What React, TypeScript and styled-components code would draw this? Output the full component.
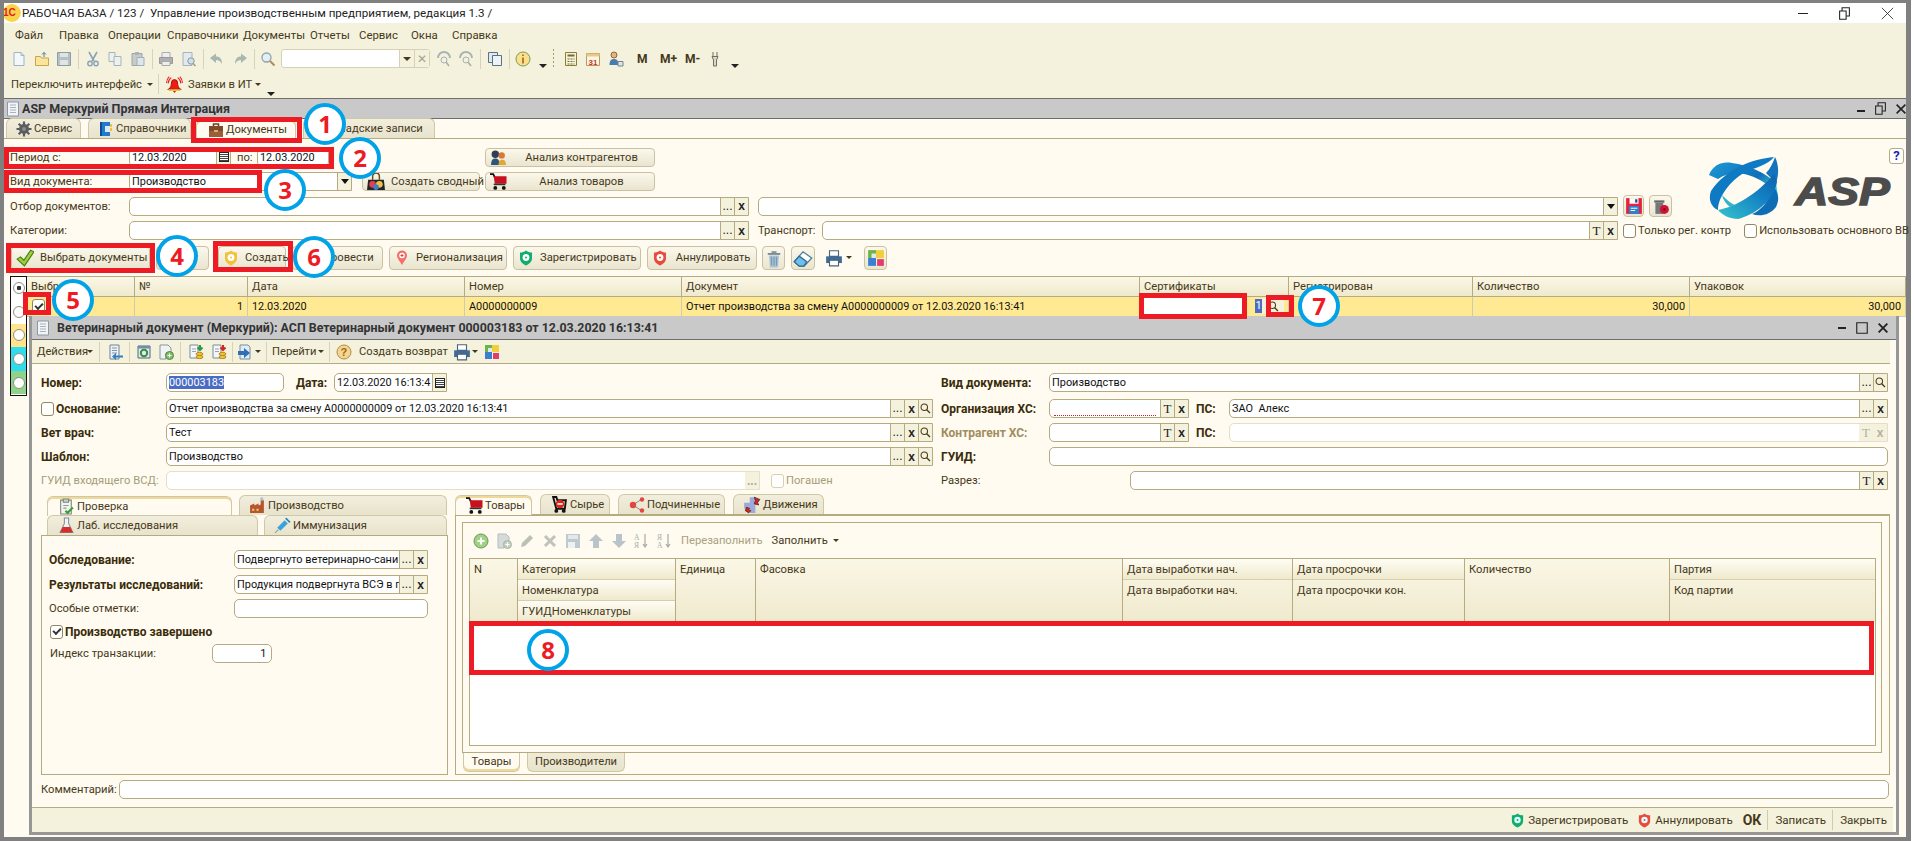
import React from 'react';
import styled, { createGlobalStyle } from 'styled-components';

const GlobalStyle = createGlobalStyle`
  html, body { margin: 0; padding: 0; background: #fff; overflow: hidden; }
  body { font-family: Roboto, 'Liberation Sans', Arial, sans-serif; font-size: 11.2px; color: #46391a; }
  * { box-sizing: border-box; }
`;

const TAN = '#b5ab80';
const CREAM = '#fffbf0';
const BAR = '#f4f1dd';
const BTN_BG = 'linear-gradient(#fbf8ec, #eae5cf)';

/* ---------- icons ---------- */

const Svg = styled.svg.attrs({ viewBox: '0 0 16 16' })<{ $s?: number }>`
  width: ${p => p.$s ?? 16}px;
  height: ${p => p.$s ?? 16}px;
  flex: none;
  display: block;
`;

const Logo1C = () => (
  <Svg $s={18}>
    <circle cx="7" cy="8" r="8" fill="#fbd34b" />
    <text x="-1" y="11" fontSize="9" fontWeight="700" fontFamily="Liberation Sans" fill="#d8261c">1С</text>
  </Svg>
);
const Page16 = ({ c = '#f4f8fb', s = '#9db4c6' }: { c?: string; s?: string }) => (
  <Svg>
    <path d="M3 1.500h7l3 3v10H3z" fill={c} stroke={s} />
    <path d="M10 1.500v3h3" fill="none" stroke={s} />
  </Svg>
);
const IcOpen = () => (
  <Svg>
    <path d="M1.500 5.500h5l1 1.500h7v7.500h-13z" fill="#fbe59a" stroke="#c9a64c" />
    <path d="M10 6V1.500M8 3.500l2-2 2 2" fill="none" stroke="#4f7a8c" />
  </Svg>
);
const IcSave = () => (
  <Svg>
    <path d="M1.500 1.500h13v13h-13z" fill="#b5c0c4" stroke="#8f9ca2" />
    <path d="M4 2h8v4H4zM4 9h8v5H4z" fill="#dfe4e4" />
  </Svg>
);
const IcCut = () => (
  <Svg>
    <path d="M4 1l5 9M12 1l-5 9" stroke="#8ba3b5" strokeWidth="1.600" fill="none" />
    <circle cx="5" cy="12.500" r="2.200" fill="none" stroke="#8ba3b5" strokeWidth="1.400" />
    <circle cx="11" cy="12.500" r="2.200" fill="none" stroke="#8ba3b5" strokeWidth="1.400" />
  </Svg>
);
const IcCopy = () => (
  <Svg>
    <path d="M2 1.500h6v9H2z" fill="#eef0ee" stroke="#a5b4bd" />
    <path d="M7 5.500h7v9H7z" fill="#eef0ee" stroke="#a5b4bd" />
  </Svg>
);
const IcPaste = () => (
  <Svg>
    <path d="M2 2.500h10v12H2z" fill="#c6ccc8" stroke="#9ca6a8" />
    <path d="M5 1h4v3H5z" fill="#aab4b8" />
    <path d="M7 6.500h7v8H7z" fill="#dfe6ea" stroke="#9fb0bb" />
  </Svg>
);
const IcPrintGray = () => (
  <Svg>
    <path d="M4 1.500h8v5H4z" fill="#eee" stroke="#aab" />
    <path d="M1.500 6.500h13v6h-13z" fill="#adb0ae" stroke="#999" />
    <path d="M4 10.500h8v4H4z" fill="#eee" stroke="#aaa" />
  </Svg>
);
const IcPreview = () => (
  <Svg>
    <path d="M2 1.500h9v13H2z" fill="#e3e9ec" stroke="#a5b4bd" />
    <circle cx="10" cy="10" r="3.200" fill="#cfe0ea" stroke="#8a9aa5" />
    <path d="M12 12.500l2.500 2.500" stroke="#b59a6c" strokeWidth="1.600" />
  </Svg>
);
const IcArrowSide = ({ flip }: { flip?: boolean }) => (
  <Svg>
    <path
      d={flip ? 'M15 7L9 2.500v3C5 5.500 3 8 3 13c2-3 3-4 6-4v3z' : 'M1 7l6-4.500v3c4 0 6 2.500 6 7.500-2-3-3-4-6-4v3z'}
      fill="#a7b8ae"
    />
  </Svg>
);
const IcMagnify = ({ s = 16 }: { s?: number }) => (
  <Svg $s={s}>
    <circle cx="6.500" cy="6.500" r="4.500" fill="#e3eef5" stroke="#8fa3ad" strokeWidth="1.300" />
    <path d="M10 10l4.500 4.500" stroke="#b08b5c" strokeWidth="2" />
  </Svg>
);
const IcTiny = () => (
  <Svg $s={13}>
    <circle cx="6.500" cy="6.500" r="4" fill="none" stroke="#4a3c14" strokeWidth="1.300" />
    <path d="M9.500 9.500l4 4" stroke="#4a3c14" strokeWidth="1.600" />
  </Svg>
);
const IcRefresh = () => (
  <Svg>
    <path d="M2 7a6 6 0 0 1 12 0" fill="none" stroke="#a9b3b5" strokeWidth="2" />
    <circle cx="8" cy="9" r="3" fill="none" stroke="#a5b0b5" />
    <path d="M10 11l3 4" stroke="#a5b0b5" strokeWidth="1.500" />
  </Svg>
);
const IcWindows = () => (
  <Svg>
    <path d="M1.500 1.500h9v10h-9z" fill="#dfe9f2" stroke="#5d7184" />
    <path d="M5.500 4.500h9v10h-9z" fill="#eef3f7" stroke="#5d7184" />
  </Svg>
);
const IcInfo = () => (
  <Svg>
    <circle cx="8" cy="8" r="7" fill="#fbe08a" stroke="#7d9a5c" />
    <path d="M8 3.500v1.500M8 6.500v6" stroke="#a8742b" strokeWidth="1.800" />
  </Svg>
);
const IcCalc = () => (
  <Svg>
    <path d="M2.500 1.500h11v13h-11z" fill="#f7f2cf" stroke="#8e7c36" />
    <path d="M4.500 3.500h7v2h-7z" fill="#6e6b4c" />
    <path d="M4.500 7.500h2v1h-2zM7.500 7.500h2v1h-2zM10.500 7.500h1v1h-1zM4.500 10h2v1h-2zM7.500 10h2v1h-2zM10.500 10h1v1h-1zM4.500 12.500h2v1h-2zM7.500 12.500h2v1h-2zM10.500 12.500h1v1h-1z" fill="#6e6b4c" />
  </Svg>
);
const IcCalendar = () => (
  <Svg>
    <path d="M1.500 2.500h13v12h-13z" fill="#fff6e2" stroke="#b49a62" />
    <path d="M1.500 2.500h13v3h-13z" fill="#e8c98a" />
    <text x="3.500" y="13.500" fontSize="8" fontFamily="Liberation Sans" fontWeight="700" fill="#c4382c">31</text>
  </Svg>
);
const IcUser = () => (
  <Svg>
    <circle cx="6" cy="4" r="3" fill="#e8b27c" stroke="#8a6a3c" />
    <path d="M1.500 14c0-5 2-6 4.500-6s3.500 1 4 3v3z" fill="#4a7ab0" />
    <path d="M10 10.500h5v4.500h-5z" fill="#dfe5ea" stroke="#77828c" />
  </Svg>
);
const IcWrench = () => (
  <Svg>
    <path d="M6 1v5M10 1v5M5 5.500h6L9.500 9v6h-3V9z" fill="#d8d8cf" stroke="#6f6f60" />
  </Svg>
);
const IcBell = () => (
  <Svg $s={17}>
    <path d="M8 3.500c2.500 0 3 2 3 4.500 0 2 1 3.500 2.500 4.500h-11C4 11.500 5 10 5 8c0-2.500.5-4.500 3-4.500z" fill="#ee1c14" stroke="#b8140c" />
    <path d="M2.500 12.500h11v1.500h-11z" fill="#d8c038" />
    <path d="M6.500 14h3L8 16z" fill="#ee1c14" />
    <path d="M2 7c0-2 1-4 3-5.500M14 7c0-2-1-4-3-5.500M.5 6.500C.5 4 1.500 2 3 .5M15.500 6.500c0-2.500-1-4.500-2.500-6" stroke="#e8241c" fill="none" />
  </Svg>
);
const IcGear = () => (
  <Svg>
    <path d="M8 .5v15M.5 8h15M2.700 2.700l10.600 10.600M13.300 2.700L2.700 13.300" stroke="#5b5d5e" strokeWidth="2.200" />
    <circle cx="8" cy="8" r="5" fill="#5b5d5e" />
    <circle cx="8" cy="8" r="2" fill="#8c8e8a" />
  </Svg>
);
const IcBook = () => (
  <Svg>
    <path d="M2 1h10v14H2z" fill="#1f7ad0" />
    <path d="M2 1h2v14H2z" fill="#0e4d92" />
    <path d="M7 5h5v6H7z" fill="#dbeaf7" />
    <path d="M12 3h2v3h-2zM12 7h2v3h-2z" fill="#f0c23c" />
  </Svg>
);
const IcCase = () => (
  <Svg>
    <path d="M5.500 4V2h5v2" fill="none" stroke="#6a3f1f" strokeWidth="1.500" />
    <path d="M1 4h14v11H1z" fill="#9a5f3a" />
    <path d="M1 4h14v5H1z" fill="#7f4a2a" />
    <path d="M6 8h4v2H6z" fill="#d8b06a" />
  </Svg>
);
const IcTick = ({ s = 18 }: { s?: number }) => (
  <Svg $s={s}>
    <path d="M1 9l3-2 3 3 6-9 3 1.500L7.500 15z" fill="#9ad13a" stroke="#4a7a18" />
  </Svg>
);
const Shield = ({ c, s = 16, dot = '#fff' }: { c: string; s?: number; dot?: string }) => (
  <Svg $s={s}>
    <path d="M8 .5c2 1.500 3.500 2 6 2v6c0 3.500-3 5.500-6 7-3-1.500-6-3.500-6-7v-6c2.500 0 4-.5 6-2z" fill={c} />
    <circle cx="8" cy="7.500" r="3.400" fill={dot} />
    <circle cx="8" cy="7.500" r="1" fill={c} />
  </Svg>
);
const IcPin = () => (
  <Svg>
    <path d="M8 15C5 10 3 8 3 5.500a5 5 0 0 1 10 0C13 8 11 10 8 15z" fill="#f4706a" />
    <circle cx="8" cy="5.500" r="2.800" fill="#fff" />
    <path d="M8 4v3M6.500 5.500h3" stroke="#e8392f" />
  </Svg>
);
const IcTrash = () => (
  <Svg $s={20}>
    <path d="M3 4h10v1.500H3z" fill="#7d8a93" />
    <path d="M6 2.500h4V4H6z" fill="#8a98a0" />
    <path d="M4 6h8l-.8 9.500H4.800z" fill="#a9c4d8" />
    <path d="M6 7v7M8 7v7M10 7v7" stroke="#7b9ab2" />
  </Svg>
);
const IcEraser = () => (
  <Svg $s={20}>
    <path d="M1 11l7-8 7 5-6 6.500H5z" fill="#fff" stroke="#4a7c9a" />
    <path d="M1 11l4-4.500 6 4.500-2.500 3.500H5z" fill="#6fc0e8" stroke="#2f6c94" />
  </Svg>
);
const IcPrinter = () => (
  <Svg $s={18}>
    <path d="M4 1.500h8v5H4z" fill="#fff" stroke="#4f6377" />
    <path d="M1 6.500h14v6H1z" fill="#3e6c96" />
    <path d="M4 10h8v5H4z" fill="#fff" stroke="#4f6377" />
  </Svg>
);
const IcPuzzle = ({ s = 18 }: { s?: number }) => (
  <Svg $s={s}>
    <path d="M1 1h7v7H1z" fill="#6fb24c" />
    <path d="M8 1h7v7H8z" fill="#f1cf38" />
    <path d="M1 8h7v7H1z" fill="#3c7fd0" />
    <path d="M9 9h6v6H9z" fill="#e23c6e" />
    <path d="M4 4h4v4H4z" fill="#dfe8ea" />
  </Svg>
);
const IcPeople = () => (
  <Svg $s={17}>
    <circle cx="5" cy="5" r="3.500" fill="#2e3f55" />
    <circle cx="11" cy="6" r="3" fill="#d8793b" />
    <path d="M1 15c0-5 2-6 4-6s4 1 4 6z" fill="#2f557a" />
    <path d="M8 15c0-4 1.500-5 3.500-5s3.500 1 3.500 5z" fill="#e0a83c" />
  </Svg>
);
const IcCart = ({ s = 17 }: { s?: number }) => (
  <Svg $s={s}>
    <path d="M0 1h3l1.500 3" fill="none" stroke="#111" strokeWidth="1.600" />
    <path d="M3.500 3h12v7h-11z" fill="#c8101e" />
    <path d="M3.500 10h11v1.500h-11z" fill="#333" />
    <circle cx="5" cy="14" r="1.800" fill="#111" />
    <circle cx="13" cy="14" r="1.800" fill="#111" />
  </Svg>
);
const IcRaw = () => (
  <Svg $s={17}>
    <path d="M2 1h3l1 3h8l-1 8H5z" fill="none" stroke="#111" strokeWidth="1.800" />
    <circle cx="8.500" cy="7.500" r="4" fill="#d8261c" />
    <path d="M6 7.500h5" stroke="#fff" strokeWidth="1.500" />
    <circle cx="5" cy="14" r="1.800" fill="#111" />
    <circle cx="12" cy="14" r="1.800" fill="#111" />
  </Svg>
);
const IcTree = () => (
  <Svg>
    <path d="M4 8l9-6M4 8l9 6" stroke="#888" />
    <circle cx="4" cy="8" r="3.200" fill="#e34444" />
    <circle cx="13" cy="2.500" r="2.200" fill="#e34444" />
    <circle cx="13" cy="13.500" r="2.200" fill="#e34444" />
  </Svg>
);
const IcMoves = () => (
  <Svg $s={18}>
    <path d="M1 6h5V1h5v14H6v-4H1z" fill="#9ea8da" />
    <path d="M10 1l5 2-2 3 1 2-4-1 1-3z" fill="#d8261c" stroke="#111" strokeWidth=".5" />
    <path d="M5 15l-3-2 1-3 3 1-1 1 2 1z" fill="#d8261c" stroke="#111" strokeWidth=".5" />
  </Svg>
);
const IcBag = () => (
  <Svg $s={18}>
    <path d="M5 6V3a3 3 0 0 1 6 0v3" fill="none" stroke="#6a4a1f" strokeWidth="1.300" />
    <path d="M1 6h14l1 9H0z" fill="#22252b" />
    <circle cx="5" cy="10" r="3" fill="#e2404c" />
    <circle cx="11" cy="10" r="3" fill="#f2c23c" />
    <circle cx="8" cy="12.500" r="2.500" fill="#3c7fd0" />
  </Svg>
);
const IcRedSave = () => (
  <Svg $s={18}>
    <path d="M1 1h14v14H1z" fill="#e2233a" />
    <path d="M4 1h8v5H4z" fill="#fff" />
    <path d="M9 2h2v3H9z" fill="#1c4f96" />
    <path d="M3.500 8h9v7h-9z" fill="#2f7fd0" />
    <path d="M5 10h6M5 12h4" stroke="#fff" />
  </Svg>
);
const IcRedTrash = () => (
  <Svg $s={18}>
    <path d="M2 3h9v2H2z" fill="#666" />
    <path d="M3 5h7v10H3z" fill="#77777a" />
    <circle cx="11" cy="11" r="4" fill="#d41034" />
    <circle cx="11" cy="11" r="1" fill="#4a0a16" />
  </Svg>
);
const IcDoc = () => (
  <Svg>
    <path d="M2.500 1h11v14h-11z" fill="#f2f4f6" stroke="#8c98a5" />
    <path d="M5 4h6M5 6.500h6M5 9h6M5 11.500h6" stroke="#a9b3bd" />
  </Svg>
);
const DocArrow = ({ c }: { c: string }) => (
  <Svg>
    <path d="M2 1h9v14H2z" fill="#eef2f6" stroke="#6f8296" />
    <path d="M4 4h5M4 6.500h5M4 9h5" stroke="#7f96ab" />
    <path d="M15 11.500H8V9l-4 3.500L8 16v-2.500h7z" fill={c} />
  </Svg>
);
const DocCycle = () => (
  <Svg>
    <path d="M2 2h12v12H2z" fill="#dfe9ef" stroke="#55697a" />
    <path d="M2 2h12v2.500H2z" fill="#6f8fa8" />
    <circle cx="8" cy="9" r="3.200" fill="none" stroke="#3c8f3c" strokeWidth="2" />
  </Svg>
);
const DocPlus = ({ faded }: { faded?: boolean }) => (
  <Svg>
    <path d="M2 1h8l3 3v5H8v6H2z" fill={faded ? '#d6dadb' : '#f0f2f4'} stroke={faded ? '#b5bbbc' : '#8795a2'} />
    <circle cx="11.500" cy="11.500" r="4" fill={faded ? '#c3d1bf' : '#7fbe6a'} stroke={faded ? '#a8b4a4' : '#4f8a3f'} />
    <path d="M11.500 9.500v4M9.500 11.500h4" stroke="#fff" />
  </Svg>
);
const DocCoins = ({ c }: { c: string }) => (
  <Svg>
    <path d="M2 1h8v13H2z" fill="#f4f6f8" stroke="#7c8b99" />
    <path d="M4 5h4M4 7.500h4" stroke="#96a3ae" />
    <path d="M12 6V1M9.500 3.500L12 6l2.500-2.500" fill="none" stroke={c} strokeWidth="2" />
    <ellipse cx="11.500" cy="10" rx="3.500" ry="1.600" fill="#f0c23c" stroke="#b68a1c" />
    <ellipse cx="11.500" cy="13" rx="3.500" ry="1.600" fill="#f0c23c" stroke="#b68a1c" />
  </Svg>
);
const IcGo = () => (
  <Svg>
    <path d="M3 1h8l2 2v12H3z" fill="#e4ecf3" stroke="#7c8b99" />
    <path d="M1 7h6V4l6 5-6 5v-3H1z" fill="#2f6fb5" />
  </Svg>
);
const IcHelp = () => (
  <Svg>
    <circle cx="8" cy="8" r="7" fill="#f6d58f" stroke="#b28a4c" />
    <text x="4.500" y="12" fontSize="11" fontWeight="700" fontFamily="Liberation Sans" fill="#9a6a1c">?</text>
  </Svg>
);
const IcCheckDoc = () => (
  <Svg $s={17}>
    <path d="M2.500 2h10v13h-10z" fill="#f2f4f0" stroke="#7a8778" />
    <path d="M5 1h5v3H5z" fill="#c9cfc9" stroke="#7a8778" />
    <path d="M5 7h5M5 9.500h3" stroke="#8f9a8f" />
    <path d="M7 12l2 2 5-5" fill="none" stroke="#3f9a3c" strokeWidth="2" />
  </Svg>
);
const IcFactory = () => (
  <Svg $s={17}>
    <path d="M1 8l4-2v2l4-2v2l2-1V3h3v12H1z" fill="#b5562c" />
    <circle cx="12" cy="1.800" r="1.600" fill="#a9c2d8" />
    <path d="M3 11h2v2H3zM7 11h2v2H7z" fill="#f0d07a" />
  </Svg>
);
const IcFlask = () => (
  <Svg $s={17}>
    <path d="M6 1h4v5l4 8.500H2L6 6z" fill="#f2f2f2" stroke="#7d8f9a" />
    <path d="M4.500 9.500h7L14 14.500H2z" fill="#d82c2c" />
  </Svg>
);
const IcSyringe = () => (
  <Svg $s={17}>
    <path d="M1 15l3-3" stroke="#8aa" />
    <path d="M3 10l7-7 3 3-7 7z" fill="#38a4df" />
    <path d="M11 1l4 4" stroke="#2f7fb5" strokeWidth="1.500" />
  </Svg>
);
const IcAdd = () => (
  <Svg>
    <circle cx="8" cy="8" r="7" fill="#9bd67e" stroke="#7b8a70" />
    <path d="M8 4.500v7M4.500 8h7" stroke="#fff" strokeWidth="2" />
  </Svg>
);
const IcPencil = () => (
  <Svg>
    <path d="M2 14l1-4 8-8 3 3-8 8z" fill="#b9c1b6" />
  </Svg>
);
const IcCross = () => (
  <Svg>
    <path d="M3 3l10 10M13 3L3 13" stroke="#c0c3bb" strokeWidth="3" />
  </Svg>
);
const IcFloppyFaded = () => (
  <Svg>
    <path d="M1 1h14v14H1z" fill="#bfcad0" />
    <path d="M3 2h10v4H3z" fill="#e3e8ea" />
    <path d="M3 9h7v6H3z" fill="#eef1f2" />
  </Svg>
);
const IcUpDown = ({ down }: { down?: boolean }) => (
  <Svg>
    <path d={down ? 'M5 1h6v7h4l-7 7-7-7h4z' : 'M5 15h6V8h4L8 1 1 8h4z'} fill="#b9c4c8" />
  </Svg>
);
const IcSort = ({ rev }: { rev?: boolean }) => (
  <Svg>
    <text x="0" y="7" fontSize="7.500" fontFamily="Liberation Serif" fill="#a4aca8">{rev ? 'Я' : 'А'}</text>
    <text x="0" y="15" fontSize="7.500" fontFamily="Liberation Serif" fill="#a4aca8">{rev ? 'А' : 'Я'}</text>
    <path d="M11 1v13M9 11l2 3 2-3" fill="none" stroke="#a4aca8" strokeWidth="1.200" />
  </Svg>
);
const IcRestore = () => (
  <Svg $s={13}>
    <path d="M2 5h8v10H2z" fill="none" stroke="#222" strokeWidth="1.300" />
    <path d="M5 5V1h9v10h-4" fill="none" stroke="#222" strokeWidth="1.300" />
  </Svg>
);
const IcClose = ({ s = 12, w = 1 }: { s?: number; w?: number }) => (
  <Svg $s={s}>
    <path d="M1 1l14 14M15 1L1 15" stroke="#222" strokeWidth={w} />
  </Svg>
);
const IcSquare = () => (
  <Svg $s={12}>
    <path d="M1 1h14v14H1z" fill="none" stroke="#222" strokeWidth="1.500" />
  </Svg>
);

const LogoSvg = styled.svg`
  width: 71px;
  height: 63px;
  flex: none;
  display: block;
`;

const SwirlLogo = () => (
  <LogoSvg viewBox="0 0 71 63">
    <defs>
      <linearGradient id="swirlA" x1="0" y1="0" x2="1" y2="0.600">
        <stop offset="0" stopColor="#1c9ad6" />
        <stop offset="0.700" stopColor="#0f6fb8" />
        <stop offset="1" stopColor="#35c0cc" />
      </linearGradient>
      <linearGradient id="swirlB" x1="0" y1="1" x2="1" y2="0">
        <stop offset="0" stopColor="#35c4cc" />
        <stop offset="0.600" stopColor="#1481c4" />
        <stop offset="1" stopColor="#0b62ad" />
      </linearGradient>
    </defs>
    <path d="M1 18C5 8 14 4 24 6c16 2 34 10 44 20l2 14c-4-8-16-18-30-22-10-3-22-2-30 4z" fill="url(#swirlA)" />
    <path d="M66 0C44 2 18 12 3 34c-3 8 0 16 7 19C10 40 22 24 36 16 48 10 60 8 66 0z" fill="#0f7ac4" />
    <path d="M67 0c4 8 4 18 1 26L58 16c4-4 7-10 9-16z" fill="#1473bd" />
    <path d="M66 30c4 6 6 12 2 20-6 8-16 10-24 7 8-3 16-11 22-27z" fill="#0f6db5" />
    <path d="M10 53c18-3 40-17 56-36l3 8c-4 20-23 33-39 37-8 0-16-4-20-9z" fill="url(#swirlB)" />
    <path d="M14 38c4 4 8 8 13 10l-5 2c-4-3-7-7-8-12z" fill="#2fb6cc" />
  </LogoSvg>
);

/* ---------- page shell ---------- */

const Stage = styled.div`
  position: relative;
  width: 1914px;
  height: 841px;
  overflow: hidden;
`;

const Frame = styled.div`
  width: 1911px;
  height: 841px;
  border-style: solid;
  border-color: #808080;
  border-width: 3px 5px 4px 4px;
  display: flex;
  flex-direction: column;
  background: ${CREAM};
`;

const AppTitle = styled.div`
  height: 20px;
  background: #fff;
  display: flex;
  align-items: center;
  color: #222;
  padding-right: 12px;
  font-size: 11.600px;
`;

const AppTitleText = styled.span`
  white-space: pre;
  flex: 1;
`;

const WinControls = styled.div<{ $gap?: number }>`
  display: flex;
  align-items: center;
  gap: ${p => p.$gap ?? 30}px;
`;

const MinLine = styled.i<{ $w?: number; $t?: number; $low?: number }>`
  display: block;
  width: ${p => p.$w ?? 10}px;
  height: ${p => p.$t ?? 1}px;
  background: #222;
  align-self: ${p => (p.$low ? 'flex-end' : 'center')};
  margin-bottom: ${p => p.$low ?? 0}px;
`;

const MainChrome = styled.div`
  height: 75px;
  background: ${BAR};
  display: flex;
  flex-direction: column;
`;

const MenuRow = styled.div`
  height: 24px;
  display: flex;
  align-items: center;
  padding-left: 11px;
  font-size: 11.400px;
`;

const MenuItem = styled.span<{ $w: number }>`
  width: ${p => p.$w}px;
  flex: none;
  white-space: nowrap;
`;

const Toolbar = styled.div<{ $h: number; $pl?: number }>`
  height: ${p => p.$h}px;
  display: flex;
  align-items: center;
  padding-left: ${p => p.$pl ?? 4}px;
`;

const ToolBtn = styled.div<{ $w?: number; $l?: number }>`
  width: ${p => p.$w ?? 22.5}px;
  height: 20px;
  margin-left: ${p => p.$l ?? 0}px;
  display: flex;
  align-items: center;
  justify-content: center;
  flex: none;
`;

const Sep = styled.i<{ $m?: number; $dotted?: boolean }>`
  display: block;
  width: 1px;
  height: 20px;
  flex: none;
  margin: 0 ${p => p.$m ?? 2.5}px;
  background: ${p => (p.$dotted ? 'repeating-linear-gradient(#a39a70 0 2px, transparent 2px 4px)' : '#d8d3b8')};
`;

const Caret = styled.i<{ $l?: number; $dark?: boolean; $d?: number }>`
  display: block;
  width: 0;
  height: 0;
  flex: none;
  margin-left: ${p => p.$l ?? 4}px;
  border-left: ${p => p.$d ?? 3}px solid transparent;
  border-right: ${p => p.$d ?? 3}px solid transparent;
  border-top: ${p => p.$d ?? 3}px solid ${p => (p.$dark ? '#222' : '#46391a')};
`;

const LowCaret = styled(Caret)`
  align-self: flex-end;
  margin-bottom: 2px;
`;

const Combo = styled.div`
  width: 149px;
  height: 19px;
  margin-left: 1px;
  display: flex;
  background: #fff;
  border: 1px solid #d6d1b6;
  border-radius: 3px;
  flex: none;
`;

const ComboSpace = styled.span`
  flex: 1;
`;

const ComboBtn = styled.div<{ $w: number }>`
  width: ${p => p.$w}px;
  flex: none;
  background: ${BAR};
  border-left: 1px solid #d6d1b6;
  display: flex;
  align-items: center;
  justify-content: center;
  color: #a7a290;
  font-size: 12px;
`;

const MemLabel = styled.b<{ $w: number; $l?: number }>`
  width: ${p => p.$w}px;
  margin-left: ${p => p.$l ?? 0}px;
  flex: none;
  font-size: 12px;
`;

const ToolText = styled.span<{ $faded?: boolean; $l?: number }>`
  white-space: nowrap;
  flex: none;
  margin-left: ${p => p.$l ?? 0}px;
  color: ${p => (p.$faded ? '#a8a17e' : '#46391a')};
`;

/* ---------- base form ---------- */

const BaseWindow = styled.div`
  flex: 1;
  min-height: 0;
  display: flex;
  flex-direction: column;
`;

const GrayTitle = styled.div<{ $h: number }>`
  height: ${p => p.$h}px;
  flex: none;
  background: #c9c9c9;
  display: flex;
  align-items: center;
  font-weight: 700;
  font-size: 12.500px;
  color: #333;
  white-space: nowrap;
`;

const BaseTitle = styled(GrayTitle)`
  border-top: 1px solid #6e6e6e;
  border-bottom: 1px solid #6e6e6e;
  padding-left: 1px;
`;

const TitleText = styled.span<{ $l: number }>`
  margin-left: ${p => p.$l}px;
  flex: 1;
`;

const TabBar = styled.div<{ $gaps?: number; $pl?: number; $line?: boolean }>`
  height: 20px;
  flex: none;
  display: flex;
  align-items: flex-end;
  gap: ${p => p.$gaps ?? 6}px;
  padding-left: ${p => p.$pl ?? 0}px;
  border-bottom: ${p => (p.$line ? `1px solid ${TAN}` : 'none')};
`;

const Tab = styled.div<{ $w: number; $active?: boolean; $pl?: number; $ml?: number }>`
  width: ${p => p.$w}px;
  height: 20px;
  flex: none;
  display: flex;
  align-items: center;
  gap: 2px;
  margin-left: ${p => p.$ml ?? 0}px;
  padding-left: ${p => p.$pl ?? 9}px;
  white-space: nowrap;
  border: 1px solid #cfc8a6;
  border-bottom: none;
  border-radius: 6px 6px 0 0;
  background: ${p => (p.$active ? CREAM : 'linear-gradient(#f2eedd, #e8e3cc)')};
  box-shadow: ${p => (p.$active ? 'inset 0 2px 0 #f0d898' : 'none')};
  margin-bottom: ${p => (p.$active ? -1 : 0)}px;
  position: relative;
`;

const TopBlock = styled.div`
  display: flex;
  padding: 8px 0 0 6px;
  flex: none;
`;

const LeftRows = styled.div`
  width: 1662px;
  flex: none;
  display: flex;
  flex-direction: column;
  gap: 4.5px;
`;

const LogoCol = styled.div`
  margin-left: 36px;
  display: flex;
  flex-direction: column;
  height: 68px;
`;

const HelpBtn = styled.div`
  width: 15px;
  height: 16px;
  margin: 1px 0 0 181px;
  border: 1px solid ${TAN};
  border-radius: 3px;
  background: #fff;
  color: #1f1fa8;
  font-weight: 700;
  font-size: 13px;
  line-height: 14px;
  text-align: center;
`;

const LogoLine = styled.div`
  display: flex;
  align-items: center;
  margin-top: -7px;
`;

const LogoWord = styled.span`
  font: italic 700 39px/1 'Liberation Sans', sans-serif;
  color: #4c4c4c;
  margin: 5px 0 0 16px;
  -webkit-text-stroke: 1.500px #4c4c4c;
  transform: scaleX(1.180);
  transform-origin: left center;
`;

const Row = styled.div<{ $h?: number; $mt?: number; $pl?: number }>`
  display: flex;
  align-items: center;
  height: ${p => p.$h ?? 20}px;
  flex: none;
  margin-top: ${p => p.$mt ?? 0}px;
  padding-left: ${p => p.$pl ?? 0}px;
`;

const Label = styled.span<{ $w?: number; $l?: number; $bold?: boolean; $muted?: boolean; $tan?: boolean }>`
  width: ${p => (p.$w ? `${p.$w}px` : 'auto')};
  flex: none;
  margin-left: ${p => p.$l ?? 0}px;
  white-space: nowrap;
  font-size: ${p => (p.$bold || p.$tan ? '12px' : 'inherit')};
  font-weight: ${p => (p.$bold || p.$tan ? 700 : 400)};
  color: ${p => (p.$muted ? '#a59c78' : p.$tan ? '#9f8d5e' : p.$bold ? '#3a2c0a' : '#46391a')};
`;

const Field = styled.div<{ $w?: number; $l?: number; $disabled?: boolean; $grow?: boolean }>`
  width: ${p => (p.$w ? `${p.$w}px` : 'auto')};
  flex: ${p => (p.$grow ? 1 : 'none')};
  min-width: 0;
  height: 19px;
  margin-left: ${p => p.$l ?? 0}px;
  display: flex;
  align-items: stretch;
  background: #fff;
  border: 1px solid ${p => (p.$disabled ? '#e4dfc9' : TAN)};
  border-radius: 5px 0 0 5px;
  overflow: hidden;
  color: #111;
`;

const RoundField = styled(Field)`
  border-radius: 5px;
`;

const FieldText = styled.span<{ $right?: boolean }>`
  flex: 1;
  min-width: 0;
  padding: 0 2px;
  line-height: 17px;
  font-size: 10.900px;
  white-space: pre;
  overflow: hidden;
  text-align: ${p => (p.$right ? 'right' : 'left')};
`;

const Picked = styled.span`
  background: #4a6cc4;
  color: #fff;
`;

const InvalidField = styled.span`
  flex: 1;
  margin: 0 4px 1px;
  border-bottom: 1px dotted #c4222a;
`;

const Addon = styled.div<{ $w?: number; $faded?: boolean; $serif?: boolean }>`
  width: ${p => p.$w ?? 14}px;
  flex: none;
  display: flex;
  align-items: center;
  justify-content: center;
  background: ${BAR};
  border-left: ${p => (p.$faded ? 'none' : `1px solid ${TAN}`)};
  color: ${p => (p.$faded ? '#b3b0a0' : '#222')};
  font: ${p => (p.$serif ? "13px 'Liberation Serif', serif" : "700 12px 'Liberation Sans', sans-serif")};
`;

const Dots = styled(Addon)`
  font-weight: 400;
  align-items: flex-end;
  line-height: 14px;
  padding-bottom: 2px;
`;

const CalGrid = styled.i`
  width: 10px;
  height: 10px;
  display: block;
  border: 1px solid #222;
  background: repeating-linear-gradient(#fff 0 1px, #444 1px 2px);
`;

const DownTri = styled.i`
  width: 0;
  height: 0;
  border-left: 4px solid transparent;
  border-right: 4px solid transparent;
  border-top: 5px solid #111;
`;

const Button = styled.div<{ $w: number; $l?: number; $h?: number; $pl?: number }>`
  width: ${p => p.$w}px;
  height: ${p => p.$h ?? 19}px;
  flex: none;
  margin-left: ${p => p.$l ?? 0}px;
  display: flex;
  align-items: center;
  padding: 0 4px 0 ${p => p.$pl ?? 4}px;
  gap: 6px;
  background: ${BTN_BG};
  border: 1px solid #c9c1a0;
  border-radius: 4px;
  white-space: nowrap;
  color: #46391a;
`;

const BtnLabel = styled.span`
  flex: 1;
  text-align: center;
`;

const SquareBtn = styled(Button)`
  justify-content: center;
  padding: 0;
`;

const ChkBox = styled.i<{ $l?: number; $faded?: boolean }>`
  display: flex;
  align-items: center;
  justify-content: center;
  flex: none;
  width: 13px;
  height: 14px;
  margin-left: ${p => p.$l ?? 0}px;
  margin-right: 2px;
  background: #fff;
  border: 1px solid ${p => (p.$faded ? '#d6d1b6' : '#8f8862')};
  border-radius: 3px;
  font-style: normal;
`;

const Tick = styled.span`
  width: 8px;
  height: 5px;
  margin-top: -2px;
  border-left: 2px solid #333;
  border-bottom: 2px solid #333;
  transform: rotate(-45deg);
`;

const ActionRow = styled(Row)`
  height: 24px;
  margin: 5px 0 0 7px;
`;

const TableArea = styled.div`
  display: flex;
  margin-top: 6px;
  padding-left: 6px;
  flex: 1;
`;

const RadioCol = styled.div`
  width: 17px;
  height: 120px;
  flex: none;
  border: 1px solid #111;
  display: flex;
  flex-direction: column;
`;

const RadioSeg = styled.div<{ $bg: string }>`
  flex: 1;
  background: ${p => p.$bg};
  display: flex;
  align-items: center;
  justify-content: center;
`;

const Radio = styled.i<{ $on?: boolean }>`
  width: 12px;
  height: 12px;
  border-radius: 50%;
  background: ${p => (p.$on ? 'radial-gradient(#333 0 2px, #fff 2.5px)' : '#fff')};
  border: 1px solid #8f8f80;
  display: block;
`;

const TableBox = styled.div`
  flex: 1;
`;

const TableGrid = styled.div<{ $row?: boolean }>`
  display: grid;
  grid-template-columns: 108px 113px 217px 217px 458px 149px 184px 217px 216px;
  height: ${p => (p.$row ? 20 : 21)}px;
  background: ${p => (p.$row ? '#ffe993' : 'linear-gradient(#fbf7e6, #efe9cd)')};
  border-top: ${p => (p.$row ? 'none' : `1px solid ${TAN}`)};
  border-bottom: ${p => (p.$row ? '1px solid #b9cfe6' : `1px solid ${TAN}`)};
`;

const Cell = styled.div<{ $right?: boolean; $row?: boolean }>`
  display: flex;
  align-items: center;
  justify-content: ${p => (p.$right ? 'flex-end' : 'flex-start')};
  padding: 0 4px;
  white-space: nowrap;
  overflow: hidden;
  border-right: 1px solid ${p => (p.$row ? '#c9cdb8' : TAN)};
  color: ${p => (p.$row ? '#111' : '#46391a')};
  font-size: ${p => (p.$row ? '10.900px' : 'inherit')};
`;

const HiNum = styled.span`
  background: #4a6cc4;
  color: #fff;
  width: 7px;
  margin-left: auto;
  line-height: 14px;
  font-size: 11px;
  text-align: center;
`;

const MiniSearch = styled.span`
  width: 22px;
  height: 16px;
  flex: none;
  display: flex;
  align-items: center;
  justify-content: center;
  background: ${BAR};
`;

/* ---------- vet document window ---------- */

const VetWindow = styled.section`
  position: absolute;
  left: 29px;
  top: 316px;
  width: 1870px;
  height: 519px;
  display: flex;
  flex-direction: column;
  background: ${CREAM};
  border: 3px solid #979797;
  border-top: none;
`;

const VetTitle = styled(GrayTitle)`
  padding-left: 3px;
  padding-right: 8px;
  border-bottom: 1px solid #6e6e6e;
  font-size: 12.400px;
`;

const VetToolbar = styled.div`
  width: 1858px;
  height: 24px;
  flex: none;
  background: ${BAR};
  border-bottom: 1px solid ${TAN};
  display: flex;
  align-items: center;
  padding-left: 5px;
`;

const ActionsText = styled(ToolText)`
  width: 46px;
`;

const GoText = styled(ToolText)`
  width: 42px;
`;

const ReturnText = styled(ToolText)`
  width: 87px;
`;

const VetBody = styled.div`
  flex: 1;
  min-height: 0;
  padding: 9px 7px 0 9px;
  display: flex;
  flex-direction: column;
`;

const HeaderForm = styled.div`
  display: flex;
  gap: 8px;
  flex: none;
`;

const FormCol = styled.div<{ $w: number }>`
  width: ${p => p.$w}px;
  flex: none;
  display: flex;
  flex-direction: column;
  gap: 5px;
`;

const FormRow = styled(Row)<{ $after?: number }>`
  height: 19px;
  margin-bottom: ${p => p.$after ?? 0}px;
`;

const Panes = styled.div`
  display: flex;
  gap: 7px;
  margin: 5px 0 0 0;
  height: 280px;
  flex: none;
`;

const LeftPane = styled.div`
  width: 407px;
  flex: none;
  display: flex;
  flex-direction: column;
`;

const TabPanel = styled.div`
  flex: 1;
  min-height: 0;
  border: 1px solid ${TAN};
`;

const LeftPanel = styled(TabPanel)`
  padding: 14px 19px 0 7px;
  display: flex;
  flex-direction: column;
`;

const PanelRow = styled(Row)<{ $after?: number; $ind?: number }>`
  height: 19px;
  margin-bottom: ${p => p.$after ?? 5}px;
  padding-left: ${p => p.$ind ?? 0}px;
`;

const RightPane = styled.div`
  width: 1435px;
  flex: none;
  display: flex;
  flex-direction: column;
`;

const RightPanel = styled(TabPanel)`
  padding: 6px 7px 0 6px;
  display: flex;
  flex-direction: column;
`;

const InnerBox = styled.div`
  height: 231px;
  flex: none;
  border: 1px solid ${TAN};
  display: flex;
  flex-direction: column;
  padding: 0 6px;
`;

const InnerToolbar = styled.div`
  height: 35px;
  flex: none;
  display: flex;
  align-items: center;
  padding-left: 0;
`;

const GridBox = styled.div`
  width: 1407px;
  height: 188px;
  background: #fff;
  border: 1px solid ${TAN};
  flex: none;
`;

const GridHead = styled.div`
  display: grid;
  grid-template-columns: 48px 158px 80px 367px 170px 172px 205px 1fr;
  height: 63px;
`;

const HeadCol = styled.div`
  display: flex;
  flex-direction: column;
  border-right: 1px solid ${TAN};
  &:last-child { border-right: none; }
  background: linear-gradient(#fbf7e6, #efe9cd);
`;

const HeadCell = styled.div<{ $grow?: boolean; $line?: boolean }>`
  height: 21px;
  flex: ${p => (p.$grow ? 1 : 'none')};
  padding: 4px 4px 0;
  white-space: nowrap;
  background: ${p => (p.$line ? 'linear-gradient(#fffdf4, #efe9cd)' : 'none')};
  border-bottom: ${p => (p.$line ? `1px solid #d6cfab` : 'none')};
`;

const BottomTabs = styled.div`
  display: flex;
  gap: 7px;
  padding-left: 1px;
`;

const LowTab = styled.div<{ $w: number; $active?: boolean }>`
  width: ${p => p.$w}px;
  height: 19px;
  flex: none;
  text-align: center;
  line-height: 17px;
  border: 1px solid #cfc8a6;
  border-top: none;
  border-radius: 0 0 6px 6px;
  background: ${p => (p.$active ? CREAM : 'linear-gradient(#efebd8, #e8e3cc)')};
  box-shadow: ${p => (p.$active ? 'inset 0 -2px 0 #f0d898' : 'none')};
`;

const CommentRow = styled(Row)`
  height: 19px;
  margin: 5px 0 0 0;
`;

const StatusBar = styled.div`
  margin-top: 7px;
  height: 25px;
  width: 1861px;
  flex: none;
  background: ${BAR};
  border-top: 1px solid ${TAN};
  display: flex;
  align-items: center;
  justify-content: flex-end;
  padding-right: 6px;
`;

const StatusItem = styled.span<{ $ok?: boolean; $l?: number; $w?: number }>`
  display: flex;
  align-items: center;
  gap: 3px;
  width: ${p => (p.$w ? `${p.$w}px` : 'auto')};
  margin-left: ${p => p.$l ?? 9}px;
  white-space: nowrap;
  font-weight: ${p => (p.$ok ? 700 : 400)};
  font-size: ${p => (p.$ok ? 14 : 11.600)}px;
`;

const StatusSep = styled.i`
  width: 1px;
  height: 20px;
  margin-left: 6px;
  background: #d0cbae;
`;

/* ---------- annotations ---------- */

const Marker = styled.div<{ $x: number; $y: number; $w: number; $h: number; $white?: boolean }>`
  position: absolute;
  left: ${p => p.$x}px;
  top: ${p => p.$y}px;
  width: ${p => p.$w}px;
  height: ${p => p.$h}px;
  border: 5px solid #ed1c24;
  background: ${p => (p.$white ? '#fff' : 'transparent')};
  pointer-events: none;
`;

const Badge = styled.div<{ $x: number; $y: number }>`
  position: absolute;
  left: ${p => p.$x - 21}px;
  top: ${p => p.$y - 21}px;
  width: 42px;
  height: 42px;
  border-radius: 50%;
  border: 4px solid #00a2e8;
  background: #fff;
  color: #ed1c24;
  font: 700 24px/34px 'Open Sans', sans-serif;
  text-align: center;
`;

const markers = [
  { x: 191, y: 117, w: 111, h: 26 },
  { x: 4, y: 147, w: 330, h: 22 },
  { x: 4, y: 170, w: 258, h: 23 },
  { x: 6, y: 243, w: 149, h: 30 },
  { x: 213, y: 241, w: 80, h: 31 },
  { x: 23, y: 292, w: 28, h: 23 },
  { x: 1139, y: 293, w: 108, h: 26, white: true },
  { x: 1266, y: 295, w: 28, h: 22 },
  { x: 469, y: 621, w: 1405, h: 54 },
];

const badges = [
  { n: 1, x: 325, y: 124 },
  { n: 2, x: 360, y: 158 },
  { n: 3, x: 285, y: 190 },
  { n: 4, x: 177, y: 256 },
  { n: 5, x: 73, y: 300 },
  { n: 6, x: 314, y: 257 },
  { n: 7, x: 1319, y: 306 },
  { n: 8, x: 548, y: 650 },
];

const menu: [string, number][] = [
  ['Файл', 44], ['Правка', 49], ['Операции', 59], ['Справочники', 76], ['Документы', 67],
  ['Отчеты', 49], ['Сервис', 52], ['Окна', 41], ['Справка', 50],
];

const AddonsDX = () => (
  <>
    <Dots>...</Dots>
    <Addon>x</Addon>
  </>
);

const AddonsDXS = () => (
  <>
    <AddonsDX />
    <Addon><IcTiny /></Addon>
  </>
);

const App: React.FC = () => (
  <Stage>
    <GlobalStyle />
    <Frame>
      <AppTitle>
        <Logo1C />
        <AppTitleText>РАБОЧАЯ БАЗА / 123 /  Управление производственным предприятием, редакция 1.3 /</AppTitleText>
        <WinControls>
          <MinLine />
          <IcRestore />
          <IcClose s={13} />
        </WinControls>
      </AppTitle>

      <MainChrome>
        <MenuRow>
          {menu.map(([t, w]) => (
            <MenuItem key={t} $w={w}>{t}</MenuItem>
          ))}
        </MenuRow>
        <Toolbar $h={23}>
          <ToolBtn><Page16 /></ToolBtn>
          <ToolBtn><IcOpen /></ToolBtn>
          <ToolBtn><IcSave /></ToolBtn>
          <Sep />
          <ToolBtn><IcCut /></ToolBtn>
          <ToolBtn><IcCopy /></ToolBtn>
          <ToolBtn><IcPaste /></ToolBtn>
          <Sep />
          <ToolBtn><IcPrintGray /></ToolBtn>
          <ToolBtn><IcPreview /></ToolBtn>
          <Sep />
          <ToolBtn><IcArrowSide /></ToolBtn>
          <ToolBtn><IcArrowSide flip /></ToolBtn>
          <Sep />
          <ToolBtn><IcMagnify /></ToolBtn>
          <Combo>
            <ComboSpace />
            <ComboBtn $w={15}><Caret $l={0} $d={4} /></ComboBtn>
            <ComboBtn $w={15}>✕</ComboBtn>
          </Combo>
          <ToolBtn $w={3} />
          <ToolBtn><IcRefresh /></ToolBtn>
          <ToolBtn><IcRefresh /></ToolBtn>
          <Sep />
          <ToolBtn><IcWindows /></ToolBtn>
          <Sep />
          <ToolBtn><IcInfo /></ToolBtn>
          <LowCaret $l={4} $dark $d={4} />
          <Sep $m={6} $dotted />
          <ToolBtn><IcCalc /></ToolBtn>
          <ToolBtn><IcCalendar /></ToolBtn>
          <ToolBtn><IcUser /></ToolBtn>
          <MemLabel $w={23} $l={10}>M</MemLabel>
          <MemLabel $w={25}>M+</MemLabel>
          <MemLabel $w={19}>M-</MemLabel>
          <ToolBtn><IcWrench /></ToolBtn>
          <LowCaret $l={4} $dark $d={4} />
        </Toolbar>
        <Toolbar $h={28} $pl={7}>
          <ToolText>Переключить интерфейс</ToolText>
          <Caret $l={5} />
          <Sep $m={5} />
          <ToolBtn $w={22}><IcBell /></ToolBtn>
          <ToolText $l={2}>Заявки в ИТ</ToolText>
          <Caret $l={3} />
          <LowCaret $l={6} $dark $d={4} />
        </Toolbar>
      </MainChrome>

      <BaseWindow>
        <BaseTitle $h={21}>
          <IcDoc />
          <TitleText $l={1}>ASP Меркурий Прямая Интеграция</TitleText>
          <WinControls $gap={9}>
            <MinLine $w={8} $t={2} $low={3} />
            <IcRestore />
            <IcClose s={10} w={2.500} />
          </WinControls>
        </BaseTitle>

        <TabBar $line $pl={2} $gaps={7}>
          <Tab $w={75}><IcGear />Сервис</Tab>
          <Tab $w={103}><IcBook />Справочники</Tab>
          <Tab $w={100} $active $pl={11} $ml={-2}><IcCase />Документы</Tab>
          <Tab $w={132} $pl={22}>Складские записи</Tab>
        </TabBar>

        <TopBlock>
          <LeftRows>
            <Row>
              <Label $w={119}>Период с:</Label>
              <Field $w={102}>
                <FieldText>12.03.2020</FieldText>
                <Addon><CalGrid /></Addon>
              </Field>
              <Label $w={20} $l={6}>по:</Label>
              <RoundField $w={72}><FieldText>12.03.2020</FieldText></RoundField>
              <Button $w={170} $l={156}><IcPeople /><BtnLabel>Анализ контрагентов</BtnLabel></Button>
            </Row>
            <Row>
              <Label $w={119}>Вид документа:</Label>
              <Field $w={223}>
                <FieldText>Производство</FieldText>
                <Addon><DownTri /></Addon>
              </Field>
              <Button $w={118} $l={10}><IcBag /><BtnLabel>Создать сводный</BtnLabel></Button>
              <Button $w={170} $l={5}><IcCart /><BtnLabel>Анализ товаров</BtnLabel></Button>
            </Row>
            <Row>
              <Label $w={119}>Отбор документов:</Label>
              <Field $w={620}>
                <FieldText />
                <AddonsDX />
              </Field>
              <Field $w={860} $l={9}>
                <FieldText />
                <Addon><DownTri /></Addon>
              </Field>
              <SquareBtn $w={21} $l={5} $h={22}><IcRedSave /></SquareBtn>
              <SquareBtn $w={23} $l={5} $h={22}><IcRedTrash /></SquareBtn>
            </Row>
          </LeftRows>
          <LogoCol>
            <HelpBtn>?</HelpBtn>
            <LogoLine>
              <SwirlLogo />
              <LogoWord>ASP</LogoWord>
            </LogoLine>
          </LogoCol>
        </TopBlock>

        <Row $mt={4.500} $pl={6}>
          <Label $w={119}>Категории:</Label>
          <Field $w={620}>
            <FieldText />
            <AddonsDX />
          </Field>
          <Label $w={64} $l={9}>Транспорт:</Label>
          <Field $w={796}>
            <FieldText />
            <Addon $serif>T</Addon>
            <Addon>x</Addon>
          </Field>
          <ChkBox $l={5} />
          <Label>Только рег. контр</Label>
          <ChkBox $l={13} />
          <Label>Использовать основного ВВ</Label>
        </Row>

        <ActionRow>
          <Button $w={139} $h={24}><IcTick /><BtnLabel>Выбрать документы</BtnLabel></Button>
          <Button $w={53} $h={24} $l={6} />
          <Button $w={68} $h={24} $l={9}><Shield c="#f2c23c" /><BtnLabel>Создать</BtnLabel></Button>
          <Button $w={91} $h={24} $l={6} $pl={30}>Провести</Button>
          <Button $w={118} $h={24} $l={6}><IcPin /><BtnLabel>Регионализация</BtnLabel></Button>
          <Button $w={128} $h={24} $l={6}><Shield c="#0fae6c" /><BtnLabel>Зарегистрировать</BtnLabel></Button>
          <Button $w={110} $h={24} $l={6}><Shield c="#ea4a3c" /><BtnLabel>Аннулировать</BtnLabel></Button>
          <SquareBtn $w={23} $h={24} $l={5}><IcTrash /></SquareBtn>
          <SquareBtn $w={24} $h={24} $l={6}><IcEraser /></SquareBtn>
          <ToolBtn $w={20} $l={9}><IcPrinter /></ToolBtn>
          <Caret $l={2} />
          <SquareBtn $w={23} $h={24} $l={12}><IcPuzzle /></SquareBtn>
        </ActionRow>

        <TableArea>
          <RadioCol>
            <RadioSeg $bg="#fff"><Radio $on /></RadioSeg>
            <RadioSeg $bg="#fff"><Radio /></RadioSeg>
            <RadioSeg $bg="#ffe48c"><Radio /></RadioSeg>
            <RadioSeg $bg="#2fdcee"><Radio /></RadioSeg>
            <RadioSeg $bg="#8fd28c"><Radio /></RadioSeg>
          </RadioCol>
          <TableBox>
            <TableGrid>
              <Cell>Выбрать</Cell>
              <Cell>№</Cell>
              <Cell>Дата</Cell>
              <Cell>Номер</Cell>
              <Cell>Документ</Cell>
              <Cell>Сертификаты</Cell>
              <Cell>Регистрирован</Cell>
              <Cell>Количество</Cell>
              <Cell>Упаковок</Cell>
            </TableGrid>
            <TableGrid $row>
              <Cell $row>
                <ChkBox $l={1}><Tick /></ChkBox>
              </Cell>
              <Cell $row $right>1</Cell>
              <Cell $row>12.03.2020</Cell>
              <Cell $row>А0000000009</Cell>
              <Cell $row>Отчет производства за смену А0000000009 от 12.03.2020 16:13:41</Cell>
              <Cell $row>
                <HiNum>1</HiNum>
                <MiniSearch><IcTiny /></MiniSearch>
              </Cell>
              <Cell $row />
              <Cell $row $right>30,000</Cell>
              <Cell $row $right>30,000</Cell>
            </TableGrid>
          </TableBox>
        </TableArea>
      </BaseWindow>
    </Frame>

    <VetWindow>
      <VetTitle $h={24}>
        <IcDoc />
        <TitleText $l={6}>Ветеринарный документ (Меркурий): АСП Ветеринарный документ 000003183 от 12.03.2020 16:13:41</TitleText>
        <WinControls $gap={10}>
          <MinLine $w={8} $t={2} $low={5} />
          <IcSquare />
          <IcClose s={10} w={3} />
        </WinControls>
      </VetTitle>

      <VetToolbar>
        <ActionsText>Действия</ActionsText>
        <Caret $l={4} />
        <Sep $m={6} />
        <ToolBtn $w={20}><DocArrow c="#2f7fc4" /></ToolBtn>
        <Sep $m={3} />
        <ToolBtn $w={22}><DocCycle /></ToolBtn>
        <ToolBtn $w={22}><DocPlus /></ToolBtn>
        <Sep $m={3} />
        <ToolBtn $w={24}><DocCoins c="#2f9a3c" /></ToolBtn>
        <ToolBtn $w={22}><DocCoins c="#d8261c" /></ToolBtn>
        <Sep $m={2} />
        <ToolBtn $w={20}><IcGo /></ToolBtn>
        <Caret $l={0} />
        <Sep $m={5} />
        <GoText>Перейти</GoText>
        <Caret $l={4} />
        <Sep $m={5} />
        <ToolBtn $w={18}><IcHelp /></ToolBtn>
        <ReturnText $l={6}>Создать возврат</ReturnText>
        <ToolBtn $w={20} $l={6}><IcPrinter /></ToolBtn>
        <Caret $l={0} />
        <ToolBtn $w={20} $l={4}><IcPuzzle s={16} /></ToolBtn>
      </VetToolbar>

      <VetBody>
        <HeaderForm>
          <FormCol $w={892}>
            <FormRow $after={2}>
              <Label $w={125} $bold>Номер:</Label>
              <RoundField $w={118}><FieldText><Picked>000003183</Picked></FieldText></RoundField>
              <Label $w={38} $l={12} $bold>Дата:</Label>
              <Field $w={113}>
                <FieldText>12.03.2020 16:13:4</FieldText>
                <Addon><CalGrid /></Addon>
              </Field>
            </FormRow>
            <FormRow>
              <ChkBox />
              <Label $w={110} $bold>Основание:</Label>
              <Field $grow>
                <FieldText>Отчет производства за смену А0000000009 от 12.03.2020 16:13:41</FieldText>
                <AddonsDXS />
              </Field>
            </FormRow>
            <FormRow>
              <Label $w={125} $bold>Вет врач:</Label>
              <Field $grow><FieldText>Тест</FieldText><AddonsDXS /></Field>
            </FormRow>
            <FormRow>
              <Label $w={125} $bold>Шаблон:</Label>
              <Field $grow><FieldText>Производство</FieldText><AddonsDXS /></Field>
            </FormRow>
            <FormRow>
              <Label $w={125} $muted>ГУИД входящего ВСД:</Label>
              <Field $w={594} $disabled>
                <FieldText />
                <Addon $faded>...</Addon>
              </Field>
              <ChkBox $l={11} $faded />
              <Label $muted>Погашен</Label>
            </FormRow>
          </FormCol>
          <FormCol $w={947}>
            <FormRow $after={2}>
              <Label $w={108} $bold>Вид документа:</Label>
              <Field $grow>
                <FieldText>Производство</FieldText>
                <Dots>...</Dots>
                <Addon><IcTiny /></Addon>
              </Field>
            </FormRow>
            <FormRow>
              <Label $w={108} $bold>Организация ХС:</Label>
              <Field $w={140}>
                <InvalidField />
                <Addon $serif>T</Addon>
                <Addon>x</Addon>
              </Field>
              <Label $w={33} $l={7} $bold>ПС:</Label>
              <Field $grow>
                <FieldText>ЗАО  Алекс</FieldText>
                <AddonsDX />
              </Field>
            </FormRow>
            <FormRow>
              <Label $w={108} $tan>Контрагент ХС:</Label>
              <Field $w={140}>
                <FieldText />
                <Addon $serif>T</Addon>
                <Addon>x</Addon>
              </Field>
              <Label $w={33} $l={7} $bold>ПС:</Label>
              <Field $grow $disabled>
                <FieldText />
                <Addon $faded $serif>T</Addon>
                <Addon $faded>x</Addon>
              </Field>
            </FormRow>
            <FormRow>
              <Label $w={108} $bold>ГУИД:</Label>
              <RoundField $grow><FieldText /></RoundField>
            </FormRow>
            <FormRow>
              <Label $w={189}>Разрез:</Label>
              <Field $grow>
                <FieldText />
                <Addon $serif>T</Addon>
                <Addon>x</Addon>
              </Field>
            </FormRow>
          </FormCol>
        </HeaderForm>

        <Panes>
          <LeftPane>
            <TabBar $pl={6} $gaps={7}>
              <Tab $w={185} $active $pl={10}><IcCheckDoc />Проверка</Tab>
              <Tab $w={208} $pl={9}><IcFactory />Производство</Tab>
            </TabBar>
            <TabBar $pl={6} $gaps={6}>
              <Tab $w={211} $pl={10}><IcFlask />Лаб. исследования</Tab>
              <Tab $w={183} $pl={9}><IcSyringe />Иммунизация</Tab>
            </TabBar>
            <LeftPanel>
              <PanelRow $after={6}>
                <Label $w={185} $bold>Обследование:</Label>
                <Field $w={194}>
                  <FieldText>Подвергнуто ветеринарно-сани</FieldText>
                  <AddonsDX />
                </Field>
              </PanelRow>
              <PanelRow>
                <Label $w={185} $bold>Результаты исследований:</Label>
                <Field $w={194}>
                  <FieldText>Продукция подвергнута ВСЭ в г</FieldText>
                  <AddonsDX />
                </Field>
              </PanelRow>
              <PanelRow $after={4}>
                <Label $w={185}>Особые отметки:</Label>
                <RoundField $w={194}><FieldText /></RoundField>
              </PanelRow>
              <PanelRow $after={3} $ind={1}>
                <ChkBox><Tick /></ChkBox>
                <Label $bold>Производство завершено</Label>
              </PanelRow>
              <PanelRow $ind={1}>
                <Label $w={162}>Индекс транзакции:</Label>
                <RoundField $w={60}><FieldText $right>1 </FieldText></RoundField>
              </PanelRow>
            </LeftPanel>
          </LeftPane>

          <RightPane>
            <TabBar $pl={0} $gaps={8} $line>
              <Tab $w={77} $active $pl={10}><IcCart />Товары</Tab>
              <Tab $w={70} $pl={10}><IcRaw />Сырье</Tab>
              <Tab $w={107} $pl={10}><IcTree />Подчиненные</Tab>
              <Tab $w={91} $pl={9}><IcMoves />Движения</Tab>
            </TabBar>
            <RightPanel>
              <InnerBox>
                <InnerToolbar>
                  <ToolBtn $w={23}><IcAdd /></ToolBtn>
                  <ToolBtn $w={23}><DocPlus faded /></ToolBtn>
                  <ToolBtn $w={23}><IcPencil /></ToolBtn>
                  <ToolBtn $w={23}><IcCross /></ToolBtn>
                  <ToolBtn $w={23}><IcFloppyFaded /></ToolBtn>
                  <ToolBtn $w={23}><IcUpDown /></ToolBtn>
                  <ToolBtn $w={23}><IcUpDown down /></ToolBtn>
                  <ToolBtn $w={23}><IcSort /></ToolBtn>
                  <ToolBtn $w={23}><IcSort rev /></ToolBtn>
                  <ToolText $faded $l={5}>Перезаполнить</ToolText>
                  <ToolText $l={9}>Заполнить</ToolText>
                  <Caret $l={5} />
                </InnerToolbar>
                <GridBox>
                  <GridHead>
                    <HeadCol><HeadCell>N</HeadCell></HeadCol>
                    <HeadCol>
                      <HeadCell $line>Категория</HeadCell>
                      <HeadCell $line>Номенклатура</HeadCell>
                      <HeadCell $line>ГУИДНоменклатуры</HeadCell>
                    </HeadCol>
                    <HeadCol><HeadCell>Единица</HeadCell></HeadCol>
                    <HeadCol><HeadCell>Фасовка</HeadCell></HeadCol>
                    <HeadCol>
                      <HeadCell $line>Дата выработки нач.</HeadCell>
                      <HeadCell $grow>Дата выработки нач.</HeadCell>
                    </HeadCol>
                    <HeadCol>
                      <HeadCell $line>Дата просрочки</HeadCell>
                      <HeadCell $grow>Дата просрочки кон.</HeadCell>
                    </HeadCol>
                    <HeadCol><HeadCell>Количество</HeadCell></HeadCol>
                    <HeadCol>
                      <HeadCell $line>Партия</HeadCell>
                      <HeadCell $grow>Код партии</HeadCell>
                    </HeadCol>
                  </GridHead>
                </GridBox>
              </InnerBox>
              <BottomTabs>
                <LowTab $w={57} $active>Товары</LowTab>
                <LowTab $w={98}>Производители</LowTab>
              </BottomTabs>
            </RightPanel>
          </RightPane>
        </Panes>

        <CommentRow>
          <Label $w={78}>Комментарий:</Label>
          <RoundField $grow><FieldText /></RoundField>
        </CommentRow>
      </VetBody>

      <StatusBar>
        <StatusItem><Shield c="#0fae6c" s={15} dot="#dff" />Зарегистрировать</StatusItem>
        <StatusItem><Shield c="#ea4a3c" s={15} dot="#dff" />Аннулировать</StatusItem>
        <StatusItem $ok $l={10}>ОК</StatusItem>
        <StatusSep />
        <StatusItem $l={7}>Записать</StatusItem>
        <StatusSep />
        <StatusItem $l={7}>Закрыть</StatusItem>
      </StatusBar>
    </VetWindow>

    {markers.map(m => (
      <Marker key={`${m.x}-${m.y}`} $x={m.x} $y={m.y} $w={m.w} $h={m.h} $white={m.white} />
    ))}
    {badges.map(b => (
      <Badge key={b.n} $x={b.x} $y={b.y}>{b.n}</Badge>
    ))}
  </Stage>
);

export default App;
